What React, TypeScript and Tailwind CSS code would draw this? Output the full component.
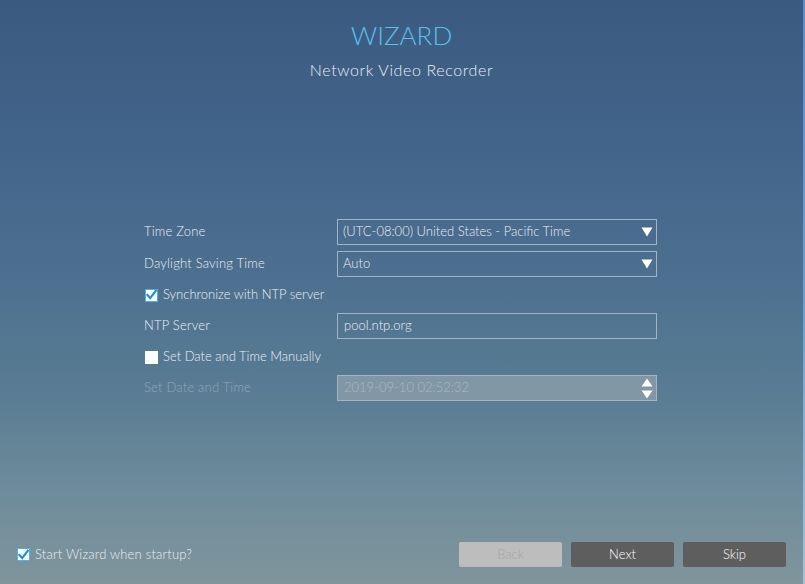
import React from "react";

const font = { fontFamily: "Lato, 'Noto Sans', 'DejaVu Sans', sans-serif" };

const CheckBox = ({ checked }: { checked: boolean }) => (
  <span
    className={`flex h-[13px] w-[13px] shrink-0 items-center justify-center bg-white ${
      checked ? "border border-[#4fb0ea]" : ""
    }`}
  >
    {checked && (
      <svg viewBox="0 0 12 12" className="h-[12px] w-[12px]">
        <path d="M1.6 6 L4.6 9.4 L10.6 1.4" fill="none" stroke="#1f8fd9" strokeWidth={2.4} strokeLinecap="square" />
      </svg>
    )}
  </span>
);

const DownArrow = () => (
  <svg viewBox="0 0 12 10" className="h-[10px] w-[12px]">
    <path d="M0.5 0.5 H11.5 L6 9.5 Z" fill="#ffffff" />
  </svg>
);

const Row = ({ label, children, dim }: { label: string; children: React.ReactNode; dim?: boolean }) => (
  <div className="flex h-[26px] items-center">
    <span className={`w-[193px] text-[13px] tracking-[0.2px] ${dim ? "text-[#8ea6b9]" : "text-[#e9eef2]"}`}>{label}</span>
    {children}
  </div>
);

const Select = ({ value }: { value: string }) => (
  <div className="flex h-[26px] w-[320px] items-center justify-between border border-[#9fb4c6] pl-[5px] pr-[3px] text-[13px] text-[#e9eef2]">
    <span>{value}</span>
    <DownArrow />
  </div>
);

const CheckRow = ({ label, checked }: { label: string; checked: boolean }) => (
  <div className="flex h-[26px] items-center gap-[5px] pl-px text-[13px] text-[#e9eef2]">
    <CheckBox checked={checked} />
    <span>{label}</span>
  </div>
);

export default function App() {
  return (
    <div className="flex h-[584px] w-[805px] overflow-hidden font-light" style={font}>
      <div className="flex w-[803px] flex-col bg-[linear-gradient(180deg,#3b5a80_0%,#43648a_25%,#4d7090_48%,#5a7d94_68%,#6f8c9b_85%,#80959c_100%)]">
        <div className="pt-[18px] text-center text-[26px] leading-[34px] text-[#56c2f0]">WIZARD</div>
        <div className="mt-[8px] text-center text-[16px] leading-[20px] tracking-[0.6px] text-[#e8eef3]">Network Video Recorder</div>

        <div className="ml-[144px] mt-[139px] flex w-[513px] flex-col gap-[5px]">
          <Row label="Time Zone">
            <Select value="(UTC-08:00) United States - Pacific Time" />
          </Row>
          <div className="mt-px">
            <Row label="Daylight Saving Time">
              <Select value="Auto" />
            </Row>
          </div>
          <CheckRow label="Synchronize with NTP server" checked />
          <Row label="NTP Server">
            <div className="flex h-[26px] w-[320px] items-center border border-[#9fb4c6] pl-[6px] text-[13px] text-[#e9eef2]">
              pool.ntp.org
            </div>
          </Row>
          <CheckRow label="Set Date and Time Manually" checked={false} />
          <Row label="Set Date and Time" dim>
            <div className="flex h-[26px] w-[320px] items-center justify-between border border-[#a3b5c3] bg-[#8197a6] pl-[6px] pr-[3px] text-[13px] text-[#a9b9c4]">
              <span>2019-09-10 02:52:32</span>
              <div className="flex flex-col gap-[3px]">
                <svg viewBox="0 0 12 9" className="h-[9px] w-[12px]">
                  <path d="M0.5 8.5 H11.5 L6 0.5 Z" fill="#ffffff" />
                </svg>
                <svg viewBox="0 0 12 9" className="h-[9px] w-[12px]">
                  <path d="M0.5 0.5 H11.5 L6 8.5 Z" fill="#ffffff" />
                </svg>
              </div>
            </div>
          </Row>
        </div>

        <div className="mt-auto flex items-center justify-between px-[17px] pb-[17px]">
          <div className="flex items-center gap-[5px] text-[13px] tracking-[0.2px] text-[#e9eef2]">
            <CheckBox checked />
            <span>Start Wizard when startup?</span>
          </div>
          <div className="flex gap-[9px] text-[13px]">
            <button className="h-[25px] w-[103px] rounded-[2px] bg-[#bdbdbd] text-[#a5a5a5]">Back</button>
            <button className="h-[25px] w-[103px] rounded-[2px] bg-[#5e5e5e] text-white">Next</button>
            <button className="h-[25px] w-[103px] rounded-[2px] bg-[#5e5e5e] text-white">Skip</button>
          </div>
        </div>
      </div>
      <div className="w-[2px] bg-[linear-gradient(180deg,#5a8dd0_0%,#6c9fd3_50%,#a6c3d6_100%)]" />
    </div>
  );
}
